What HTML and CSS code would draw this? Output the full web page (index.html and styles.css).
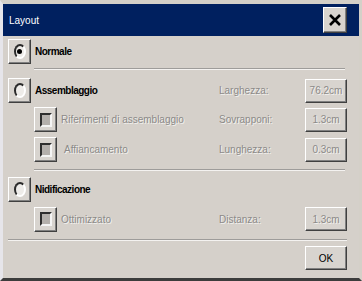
FILE: index.html
```html
<!DOCTYPE html>
<html lang="it">
<head>
  <meta charset="UTF-8" />
  <title>Layout</title>
  <link rel="stylesheet" href="styles.css">
</head>
<body>

<div class="window">
  <!-- Title bar -->
  <div class="titlebar">
    <span class="title">Layout</span>
    <button class="close">
      <svg width="12" height="12" viewBox="0 0 12 12"><path d="M1 1 L11 11 M11 1 L1 11" stroke="#000" stroke-width="2.6" fill="none"/></svg>
    </button>
  </div>

  <div class="content">
    <div class="row">
      <div class="opt"><span class="btn radio on"><i></i></span><b>Normale</b></div>
    </div>
    <div class="sep indent sep1"></div>

    <div class="row row-assembl">
      <div class="opt"><span class="btn radio"><i></i></span><b>Assemblaggio</b></div>
      <div class="param"><span class="lbl dim">Larghezza:</span><span class="btn field dim">76.2cm</span></div>
    </div>
    <div class="row row-sub1">
      <div class="opt indent"><span class="btn check"><i></i></span><span class="dim">Riferimenti di assemblaggio</span></div>
      <div class="param"><span class="lbl dim">Sovrapponi:</span><span class="btn field dim">1.3cm</span></div>
    </div>
    <div class="row row-sub2">
      <div class="opt indent"><span class="btn check"><i></i></span><span class="dim pad">Affiancamento</span></div>
      <div class="param"><span class="lbl dim">Lunghezza:</span><span class="btn field dim">0.3cm</span></div>
    </div>
    <div class="sep indent sep2"></div>

    <div class="row row-nid">
      <div class="opt"><span class="btn radio"><i></i></span><b>Nidificazione</b></div>
    </div>
    <div class="row row-sub3">
      <div class="opt indent"><span class="btn check"><i></i></span><span class="dim">Ottimizzato</span></div>
      <div class="param"><span class="lbl dim">Distanza:</span><span class="btn field dim">1.3cm</span></div>
    </div>
    <div class="sep sep3"></div>

    <div class="footer">
      <span class="btn field">OK</span>
    </div>
  </div>
</div>

</body>
</html>
```

FILE: styles.css
```css
* { box-sizing: border-box; margin: 0; padding: 0; }
body { font-family: 'Liberation Sans', Arial, sans-serif; font-size: 10px; color: #000; background: #d4d0c8; }
.window { width: 362px; height: 281px; background: #d5d0ca; border-top: 4px solid #d4d0c8; border-left: 3px solid #e6e5ea; border-right: 3px solid #d4d0c8; border-bottom: 3px solid #3c3c3c; }
.titlebar { height: 32px; background: #00205f; display: flex; align-items: center; justify-content: space-between; padding: 0 12px 0 6px; }
.title { color: #fff; font-size: 10px; }
.close { width: 24px; height: 26px; background: #d8d4ce; border: 1px solid; border-color: #fff #404040 #404040 #fff; box-shadow: inset -1px -1px 0 #808080; display: flex; align-items: center; justify-content: center; }
.content { padding: 3px 12px 0 5px; }
.row { display: flex; align-items: center; justify-content: space-between; height: 25px; }
.opt { display: flex; align-items: center; gap: 4px; }
.opt b { letter-spacing: -0.5px; }
.indent { margin-left: 26px; }
.pad { padding-left: 3px; }
.param { display: flex; align-items: center; }
.lbl { width: 86px; }
.dim { color: #8c8a88; text-shadow: 1px 1px 0 #f2f0ee; }
.btn { display: flex; align-items: center; justify-content: center; background: #d8d4cf; border: 1px solid; border-color: #fff #404040 #404040 #fff; box-shadow: inset -1px -1px 0 #808080; }
.radio { width: 23px; height: 25px; }
.radio i { width: 12px; height: 15px; border-radius: 50%; border: 2px solid; border-color: #2a2a2a #fff #fff #2a2a2a; background: #eeece9; display: flex; align-items: center; justify-content: center; }
.radio.on i::after { content: ""; width: 5px; height: 5px; border-radius: 50%; background: #000; }
.check { width: 23px; height: 25px; }
.check i { width: 12px; height: 14px; border: 2px solid; border-color: #2e2e2e #f4f4f4 #f4f4f4 #2e2e2e; background: #b4b0ac; }
.field { width: 42px; height: 24px; }
.sep { border-top: 1px solid #9e9c9a; border-bottom: 1px solid #f4f2f0; }
.sep1 { margin-top: 4px; margin-right: 2px; }
.row-assembl { margin-top: 8px; }
.row-sub1 { margin-top: 4px; }
.row-sub2 { margin-top: 5px; }
.sep2 { margin-top: 7px; margin-right: 2px; }
.row-nid { margin-top: 6px; }
.row-sub3 { margin-top: 4px; height: 26px; }
.sep3 { margin-top: 7px; }
.footer { display: flex; justify-content: flex-end; margin-top: 5px; }
```
